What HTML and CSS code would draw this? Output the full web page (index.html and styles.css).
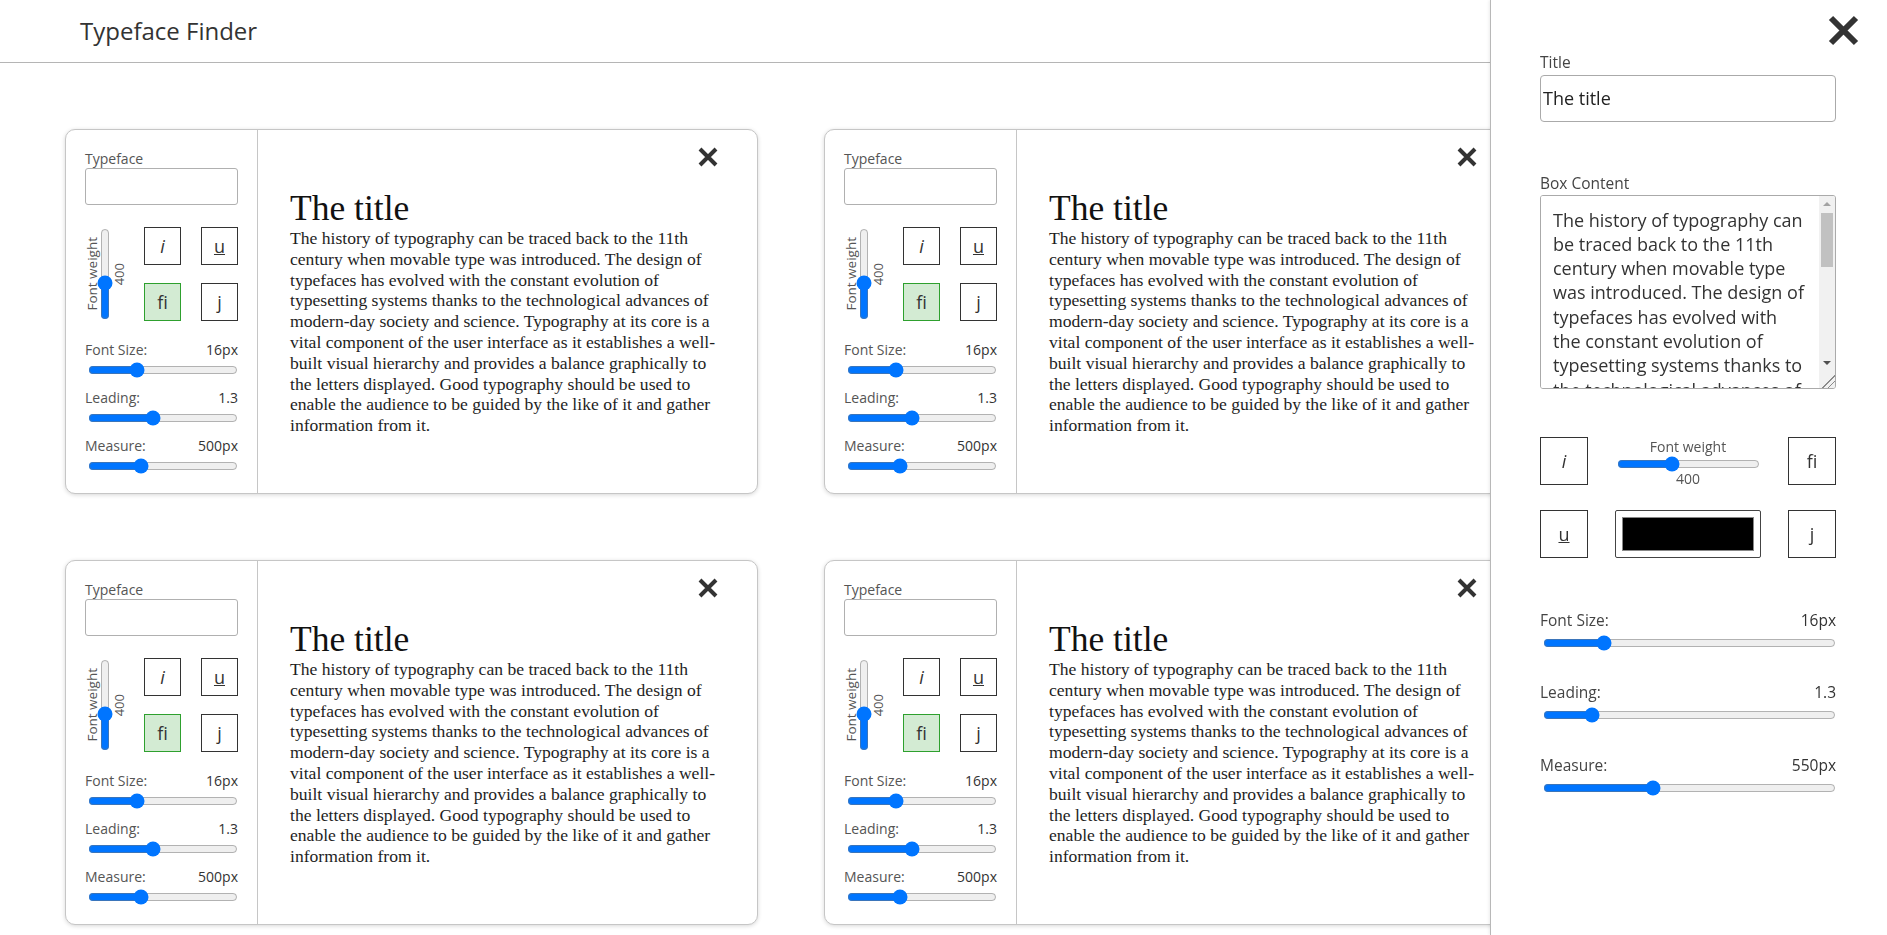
FILE: index.html
```html
<!DOCTYPE html>
<html lang="en">
<head>
<meta charset="utf-8">
<title>Typeface Finder</title>
<link rel="stylesheet" href="styles.css">
</head>
<body>
<header class="topbar"><h1>Typeface Finder</h1></header>

<main class="grid">
  <section class="card">
    <div class="panel">
      <label class="lbl">Typeface</label>
      <input class="face" type="text">
      <div class="ctrl">
        <div class="weight">
          <span class="vtext">Font weight</span>
          <div class="vslider"><input type="range" min="100" max="900" step="100" value="400"></div>
          <span class="vval">400</span>
        </div>
        <div class="btns">
          <button class="btn"><i>i</i></button>
          <button class="btn"><u>u</u></button>
          <button class="btn on">fi</button>
          <button class="btn">j</button>
        </div>
      </div>
      <div class="row first"><span>Font Size:</span><span class="val">16px</span></div>
      <input class="range" type="range" min="8" max="34" value="16">
      <div class="row"><span>Leading:</span><span class="val">1.3</span></div>
      <input class="range" type="range" min="0.7" max="2.1" step="0.1" value="1.3">
      <div class="row"><span>Measure:</span><span class="val">500px</span></div>
      <input class="range" type="range" min="0" max="1500" value="500">
    </div>
    <div class="content">
      <button class="close" aria-label="Close"><svg viewBox="0 0 20 20" width="20" height="20"><path d="M2 2L18 18M18 2L2 18" stroke="#333" stroke-width="4"/></svg></button>
      <h2 class="title">The title</h2>
      <p class="body">The history of typography can be traced back to the 11th<br>century when movable type was introduced. The design of<br>typefaces has evolved with the constant evolution of<br>typesetting systems thanks to the technological advances of<br>modern-day society and science. Typography at its core is a<br>vital component of the user interface as it establishes a well-<br>built visual hierarchy and provides a balance graphically to<br>the letters displayed. Good typography should be used to<br>enable the audience to be guided by the like of it and gather<br>information from it.</p>
    </div>
  </section>

  <section class="card">
    <div class="panel">
      <label class="lbl">Typeface</label>
      <input class="face" type="text">
      <div class="ctrl">
        <div class="weight">
          <span class="vtext">Font weight</span>
          <div class="vslider"><input type="range" min="100" max="900" step="100" value="400"></div>
          <span class="vval">400</span>
        </div>
        <div class="btns">
          <button class="btn"><i>i</i></button>
          <button class="btn"><u>u</u></button>
          <button class="btn on">fi</button>
          <button class="btn">j</button>
        </div>
      </div>
      <div class="row first"><span>Font Size:</span><span class="val">16px</span></div>
      <input class="range" type="range" min="8" max="34" value="16">
      <div class="row"><span>Leading:</span><span class="val">1.3</span></div>
      <input class="range" type="range" min="0.7" max="2.1" step="0.1" value="1.3">
      <div class="row"><span>Measure:</span><span class="val">500px</span></div>
      <input class="range" type="range" min="0" max="1500" value="500">
    </div>
    <div class="content">
      <button class="close" aria-label="Close"><svg viewBox="0 0 20 20" width="20" height="20"><path d="M2 2L18 18M18 2L2 18" stroke="#333" stroke-width="4"/></svg></button>
      <h2 class="title">The title</h2>
      <p class="body">The history of typography can be traced back to the 11th<br>century when movable type was introduced. The design of<br>typefaces has evolved with the constant evolution of<br>typesetting systems thanks to the technological advances of<br>modern-day society and science. Typography at its core is a<br>vital component of the user interface as it establishes a well-<br>built visual hierarchy and provides a balance graphically to<br>the letters displayed. Good typography should be used to<br>enable the audience to be guided by the like of it and gather<br>information from it.</p>
    </div>
  </section>

  <section class="card">
    <div class="panel">
      <label class="lbl">Typeface</label>
      <input class="face" type="text">
      <div class="ctrl">
        <div class="weight">
          <span class="vtext">Font weight</span>
          <div class="vslider"><input type="range" min="100" max="900" step="100" value="400"></div>
          <span class="vval">400</span>
        </div>
        <div class="btns">
          <button class="btn"><i>i</i></button>
          <button class="btn"><u>u</u></button>
          <button class="btn on">fi</button>
          <button class="btn">j</button>
        </div>
      </div>
      <div class="row first"><span>Font Size:</span><span class="val">16px</span></div>
      <input class="range" type="range" min="8" max="34" value="16">
      <div class="row"><span>Leading:</span><span class="val">1.3</span></div>
      <input class="range" type="range" min="0.7" max="2.1" step="0.1" value="1.3">
      <div class="row"><span>Measure:</span><span class="val">500px</span></div>
      <input class="range" type="range" min="0" max="1500" value="500">
    </div>
    <div class="content">
      <button class="close" aria-label="Close"><svg viewBox="0 0 20 20" width="20" height="20"><path d="M2 2L18 18M18 2L2 18" stroke="#333" stroke-width="4"/></svg></button>
      <h2 class="title">The title</h2>
      <p class="body">The history of typography can be traced back to the 11th<br>century when movable type was introduced. The design of<br>typefaces has evolved with the constant evolution of<br>typesetting systems thanks to the technological advances of<br>modern-day society and science. Typography at its core is a<br>vital component of the user interface as it establishes a well-<br>built visual hierarchy and provides a balance graphically to<br>the letters displayed. Good typography should be used to<br>enable the audience to be guided by the like of it and gather<br>information from it.</p>
    </div>
  </section>

  <section class="card">
    <div class="panel">
      <label class="lbl">Typeface</label>
      <input class="face" type="text">
      <div class="ctrl">
        <div class="weight">
          <span class="vtext">Font weight</span>
          <div class="vslider"><input type="range" min="100" max="900" step="100" value="400"></div>
          <span class="vval">400</span>
        </div>
        <div class="btns">
          <button class="btn"><i>i</i></button>
          <button class="btn"><u>u</u></button>
          <button class="btn on">fi</button>
          <button class="btn">j</button>
        </div>
      </div>
      <div class="row first"><span>Font Size:</span><span class="val">16px</span></div>
      <input class="range" type="range" min="8" max="34" value="16">
      <div class="row"><span>Leading:</span><span class="val">1.3</span></div>
      <input class="range" type="range" min="0.7" max="2.1" step="0.1" value="1.3">
      <div class="row"><span>Measure:</span><span class="val">500px</span></div>
      <input class="range" type="range" min="0" max="1500" value="500">
    </div>
    <div class="content">
      <button class="close" aria-label="Close"><svg viewBox="0 0 20 20" width="20" height="20"><path d="M2 2L18 18M18 2L2 18" stroke="#333" stroke-width="4"/></svg></button>
      <h2 class="title">The title</h2>
      <p class="body">The history of typography can be traced back to the 11th<br>century when movable type was introduced. The design of<br>typefaces has evolved with the constant evolution of<br>typesetting systems thanks to the technological advances of<br>modern-day society and science. Typography at its core is a<br>vital component of the user interface as it establishes a well-<br>built visual hierarchy and provides a balance graphically to<br>the letters displayed. Good typography should be used to<br>enable the audience to be guided by the like of it and gather<br>information from it.</p>
    </div>
  </section>
</main>

<aside class="sidebar">
  <div class="side-top">
    <button class="side-close" aria-label="Close"><svg viewBox="0 0 31 31" width="31" height="31"><path d="M3 3L28 28M28 3L3 28" stroke="#333" stroke-width="6"/></svg></button>
  </div>
  <div class="form">
    <label class="flabel">Title</label>
    <input class="tinput" type="text" value="The title">
    <label class="flabel gap">Box Content</label>
    <div class="tbox">
      <textarea class="tarea">The history of typography can be traced back to the 11th century when movable type was introduced. The design of typefaces has evolved with the constant evolution of typesetting systems thanks to the technological advances of modern-day society and science. Typography at its core is a vital component of the user interface as it establishes a well-built visual hierarchy and provides a balance graphically to the letters displayed. Good typography should be used to enable the audience to be guided by the like of it and gather information from it.</textarea>
      <div class="sbar">
        <div class="sarrow"><span class="tri up"></span></div>
        <div class="strack"><div class="sthumb"></div></div>
        <div class="sarrow"><span class="tri down"></span></div>
        <div class="scorner"></div>
      </div>
    </div>
    <div class="tools">
      <button class="sbtn"><i>i</i></button>
      <div class="sweight">
        <span class="swl">Font weight</span>
        <input class="swr" type="range" min="100" max="900" step="100" value="400">
        <span class="swv">400</span>
      </div>
      <button class="sbtn">fi</button>
      <button class="sbtn"><u>u</u></button>
      <div class="colorbox"><div class="swatch"></div></div>
      <button class="sbtn">j</button>
    </div>
    <div class="srow first"><span>Font Size:</span><span class="val">16px</span></div>
    <input class="srange" type="range" min="8" max="50" value="16">
    <div class="srow"><span>Leading:</span><span class="val">1.3</span></div>
    <input class="srange" type="range" min="0.9" max="3.6" step="0.1" value="1.3">
    <div class="srow"><span>Measure:</span><span class="val">550px</span></div>
    <input class="srange" type="range" min="0" max="1500" value="550">
  </div>
</aside>
</body>
</html>
```

FILE: styles.css
```css
* { box-sizing: border-box; }
html, body { margin: 0; height: 100%; overflow: hidden; }
body { font-family: "Open Sans", "Noto Sans", sans-serif; color: #333; background: #fff; }

.topbar { height: 63px; border-bottom: 1px solid #b5b5b5; padding-left: 80px; }
.topbar h1 { margin: 0; font-weight: 400; font-size: 24px; line-height: 62px; color: #333; }

.grid {
  display: grid;
  grid-template-columns: 693px 693px;
  grid-auto-rows: 365px;
  gap: 66px;
  padding: 66px 0 0 65px;
}

.card {
  display: flex;
  background: #fff;
  border: 1px solid #c6c6c6;
  border-radius: 10px;
  box-shadow: 0 1px 4px rgba(0, 0, 0, 0.16);
}

.panel {
  width: 192px;
  flex: none;
  border-right: 1px solid #c6c6c6;
  padding: 19px 19px 0 19px;
}
.lbl { display: block; font-size: 14px; line-height: 19px; color: #555; }
.face {
  display: block; width: 100%; height: 37px; margin: 0;
  border: 1px solid #b0b0b0; border-radius: 3px; background: #fff;
}

.ctrl { display: flex; justify-content: space-between; align-items: center; height: 96px; margin-top: 21px; }
.weight { display: flex; align-items: center; height: 96px; }
.vtext { writing-mode: vertical-rl; transform: rotate(180deg); font-size: 13.5px; line-height: 14px; color: #555; white-space: nowrap; }
.vslider { width: 16px; height: 92px; display: flex; align-items: center; justify-content: center; margin-left: -2px; }
.vslider input { flex: none; width: 92px; height: 16px; margin: 0; transform: rotate(-90deg); }
.vval { writing-mode: vertical-rl; transform: rotate(180deg); font-size: 13px; line-height: 14px; color: #555; margin-left: -1px; }

.btns { display: grid; grid-template-columns: 37px 37px; grid-template-rows: 38px 38px; column-gap: 20px; row-gap: 18px; }
.btn {
  display: flex; align-items: center; justify-content: center; padding: 0;
  border: 1px solid #333; background: #fff; color: #333;
  font-family: "Open Sans", sans-serif; font-size: 18px;
}
.btn.on { background: #d3ebd3; border-color: #2ea02e; }

.row { display: flex; justify-content: space-between; font-size: 14px; line-height: 19px; color: #555; margin-top: 10px; }
.row.first { margin-top: 18px; }
.row .val { color: #333; }
.range { display: block; width: 150px; height: 16px; margin: 3px 0 0 3px; }

.content { flex: 1; display: flex; flex-direction: column; padding: 17px 39px 0 32px; min-width: 0; }
.close { align-self: flex-end; width: 20px; height: 20px; border: 0; padding: 0; background: none; display: block; }
.close svg { display: block; }
.title { font-family: "Liberation Serif", serif; font-weight: 400; font-size: 35.5px; line-height: 40px; margin: 21px 0 0; color: #111; }
.body { font-family: "Liberation Serif", serif; font-size: 17.6px; line-height: 20.8px; margin: 0; color: #1e1e1e; white-space: nowrap; }

.sidebar {
  position: fixed; top: 0; right: 0; bottom: 0; width: 397px;
  background: #fff; border-left: 1px solid #b8b8b8;
  box-shadow: -1px 0 3px rgba(0, 0, 0, 0.08);
}
.side-top { display: flex; justify-content: flex-end; padding: 15px 28px 0 0; height: 46px; }
.side-close { width: 31px; height: 31px; border: 0; padding: 0; background: none; }
.side-close svg { display: block; }
.form { padding: 0 51px 0 49px; }
.flabel { display: block; font-size: 15.5px; line-height: 21px; color: #444; margin-top: 5.5px; }
.flabel.gap { margin-top: 51px; }
.tinput {
  display: block; width: 100%; height: 47px; margin-top: 2px;
  font-family: "Open Sans", sans-serif; font-size: 18px; color: #222;
  border: 1px solid #aaa; border-radius: 4px; padding: 1px 2px;
}

.tbox {
  display: flex; height: 194px; margin-top: 1px;
  border: 1px solid #aaa; border-radius: 3px; overflow: hidden; background: #fff;
}
.tarea {
  flex: 1; min-width: 0; height: 100%; margin: 0;
  font-family: "Open Sans", sans-serif; font-size: 18px; line-height: 24.3px; color: #333;
  border: 0; padding: 12px 12px 0; overflow: hidden; resize: none; outline: none;
}
.sbar { width: 16px; flex: none; display: flex; flex-direction: column; background: #f1f1f1; }
.sarrow { height: 17px; display: flex; align-items: center; justify-content: center; }
.tri { width: 0; height: 0; border-left: 4px solid transparent; border-right: 4px solid transparent; }
.tri.up { border-bottom: 4px solid #a3a3a3; }
.tri.down { border-top: 4px solid #505050; }
.strack { flex: 1; padding: 0 2px; }
.sthumb { height: 54px; background: #c1c1c1; }
.scorner {
  height: 16px;
  background: linear-gradient(135deg, transparent 58%, #8a8a8a 58% 63%, transparent 63% 76%, #8a8a8a 76% 81%, transparent 81%);
}

.tools {
  display: grid; grid-template-columns: 48px 1fr 48px; grid-template-rows: 48px 48px;
  row-gap: 25px; margin-top: 48px;
}
.sbtn {
  display: flex; align-items: center; justify-content: center; padding: 0;
  border: 1px solid #333; background: #fff; color: #333;
  font-family: "Open Sans", sans-serif; font-size: 18px;
}
.sweight { display: flex; flex-direction: column; align-items: center; }
.swl { font-size: 14px; line-height: 19px; color: #555; }
.swr { width: 143px; height: 16px; margin: 0; }
.swv { font-size: 14px; line-height: 19px; color: #555; margin-top: -3px; }
.colorbox { justify-self: center; width: 146px; height: 48px; border: 1px solid #444; border-radius: 2px; padding: 6px; background: #fff; }
.swatch { width: 100%; height: 100%; background: #000; border: 1px solid #888; }

.srow { display: flex; justify-content: space-between; font-size: 15.5px; line-height: 21px; color: #444; margin-top: 31.5px; }
.srow.first { margin-top: 52px; }
.srow .val { color: #333; }
.srange { display: block; width: 293px; height: 16px; margin: 4px 0 0 3px; }
```
